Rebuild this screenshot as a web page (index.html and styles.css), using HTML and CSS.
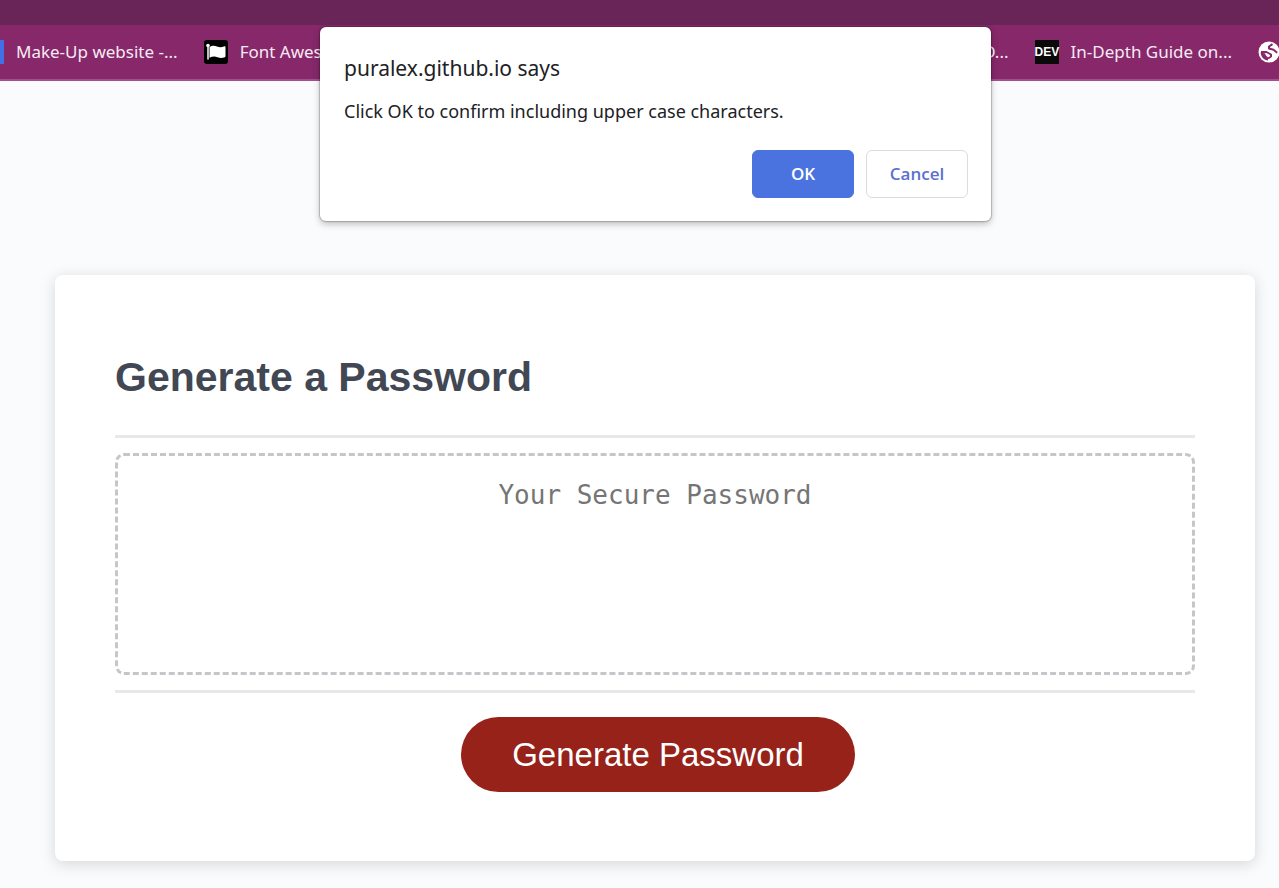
FILE: index.html
```html
<!DOCTYPE html>
<html lang="en">
<head>
<meta charset="utf-8">
<title>Password Generator</title>
<link rel="stylesheet" href="styles.css">
</head>
<body>
<header class="browser">
  <div class="toolbar"></div>
  <nav class="bookmarks" aria-label="Bookmarks">
    <div class="group">
      <a class="bookmark" href="#"><span class="favicon-edge"></span>Make-Up website -...</a>
      <a class="bookmark" href="#">
        <svg class="favicon" viewBox="0 0 24 24" aria-hidden="true">
          <rect width="24" height="24" rx="3" fill="#000"/>
          <circle cx="4" cy="5.5" r="1.800" fill="#fff"/>
          <path d="M4 6v13" stroke="#fff" stroke-width="1.500" stroke-linecap="round"/>
          <path d="M5.500 7c3-2 5-1.500 7.500-.5s4.500 1 7.500-.2c.6-.3 1 0 1 .6v9.300c0 .5-.3.800-.7 1-3 1.300-5 .8-7.300 0s-5-1-8 .6z" fill="#fff"/>
        </svg>
        Font Awesome
      </a>
    </div>
    <div class="group">
      <a class="bookmark" href="#">D...</a>
      <a class="bookmark" href="#"><span class="favicon dev">DEV</span>In-Depth Guide on...</a>
      <a class="globe" href="#" aria-label="Website">
        <svg viewBox="0 0 22 22" width="22" height="22" aria-hidden="true">
          <circle cx="11" cy="11" r="10.500" fill="#fff"/>
          <path d="M2.500 11.500C3 16 6 19 10 19.500v-3L7.500 14v-1.500z" fill="#86286a"/>
          <path d="M3 11h5.500l4.500 2.500v2l-3 2M14.500 3.200L11 5.500v2l4.500 1.300 3.700 3" fill="none" stroke="#86286a" stroke-width="2" stroke-linejoin="round"/>
        </svg>
      </a>
    </div>
  </nav>
</header>

<main class="page">
  <section class="card">
    <h1 class="card-title">Generate a Password</h1>
    <div class="card-body">
      <textarea class="password" placeholder="Your Secure Password" aria-label="Your Secure Password" readonly></textarea>
    </div>
    <div class="card-footer">
      <button class="generate" type="button">Generate Password</button>
    </div>
  </section>
</main>

<div class="dialog" role="dialog" aria-labelledby="dialog-title" aria-describedby="dialog-text">
  <h2 class="dialog-title" id="dialog-title">puralex.github.io says</h2>
  <p class="dialog-text" id="dialog-text">Click OK to confirm including upper case characters.</p>
  <div class="dialog-actions">
    <button class="dialog-button primary" type="button">OK</button>
    <button class="dialog-button" type="button">Cancel</button>
  </div>
</div>
</body>
</html>
```
FILE: styles.css
```css
* {
  box-sizing: border-box;
}

body {
  margin: 0;
  background: #fafbfd;
  font-family: "Liberation Sans", Arial, sans-serif;
}

.toolbar {
  height: 25px;
  background: #692557;
}

.bookmarks {
  display: flex;
  justify-content: space-between;
  height: 56px;
  padding-bottom: 1px;
  overflow: hidden;
  background: #86286a;
  border-bottom: 2px solid #a1508b;
  font-family: "Noto Sans", sans-serif;
  font-size: 17px;
  white-space: nowrap;
}

.group {
  display: flex;
  align-items: center;
  gap: 26px;
}

.bookmark {
  display: flex;
  align-items: center;
  gap: 12px;
  color: #f8eaf4;
  text-decoration: none;
}

.favicon {
  display: block;
  width: 24px;
  height: 24px;
}

.dev {
  background: #0a0a0a;
  color: #fff;
  font-family: "Liberation Sans Narrow", "Liberation Sans", sans-serif;
  font-size: 12px;
  font-weight: 700;
  line-height: 24px;
  text-align: center;
}

.favicon-edge {
  width: 4px;
  height: 24px;
  background: #4170e6;
}

.globe {
  display: flex;
  width: 21px;
  overflow: hidden;
}

.globe svg {
  flex: none;
}

.page {
  padding: 194px 24px 27px 55px;
}

.card {
  padding: 60px;
  background: #fff;
  border-radius: 8px;
  box-shadow: 0 3px 15px rgba(0, 0, 0, 0.15);
}

.card-title {
  margin: 0;
  padding: 18px 0 34px;
  color: #414854;
  font-size: 41px;
  line-height: 48px;
}

.card-body {
  padding: 15px 0;
  border-top: 3px solid #e8e8e9;
  border-bottom: 3px solid #e8e8e9;
}

.password {
  display: block;
  width: 100%;
  height: 222px;
  padding: 24px;
  border: 3px dashed #c4c6ca;
  border-radius: 9px;
  background: #fff;
  color: #757575;
  font-family: "DejaVu Sans Mono", monospace;
  font-size: 26px;
  line-height: 30px;
  text-align: center;
  resize: none;
}

.password::placeholder {
  color: #757575;
}

.card-footer {
  display: flex;
  justify-content: center;
  padding: 24px 0 9px 6px;
}

.generate {
  height: 75px;
  padding: 0 51px;
  border: 0;
  border-radius: 38px;
  background: #962219;
  color: #fff;
  font-family: inherit;
  font-size: 33px;
}

.dialog {
  position: absolute;
  top: 27px;
  left: 320px;
  width: 671px;
  padding: 24px 23px 23px 24px;
  border-radius: 6px;
  background: #fff;
  box-shadow: 0 0 1px 1px rgba(0, 0, 0, 0.2), 0 3px 7px rgba(0, 0, 0, 0.25);
  color: #202124;
  font-family: "Noto Sans", sans-serif;
}

.dialog-title {
  margin: 0 0 12px;
  font-size: 21px;
  font-weight: 400;
  line-height: 34px;
}

.dialog-text {
  margin: 0 0 25px;
  font-size: 18px;
  line-height: 28px;
}

.dialog-actions {
  display: flex;
  justify-content: flex-end;
  gap: 12px;
}

.dialog-button {
  width: 102px;
  height: 48px;
  padding: 0 0 2px;
  border: 1px solid #dadce0;
  border-radius: 6px;
  background: #fff;
  color: #5b70cf;
  font-family: "Open Sans", "Noto Sans", sans-serif;
  font-size: 17px;
  font-weight: 600;
}

.dialog-button.primary {
  border-color: #4b73e0;
  background: #4b73e0;
  color: #fff;
}
```
